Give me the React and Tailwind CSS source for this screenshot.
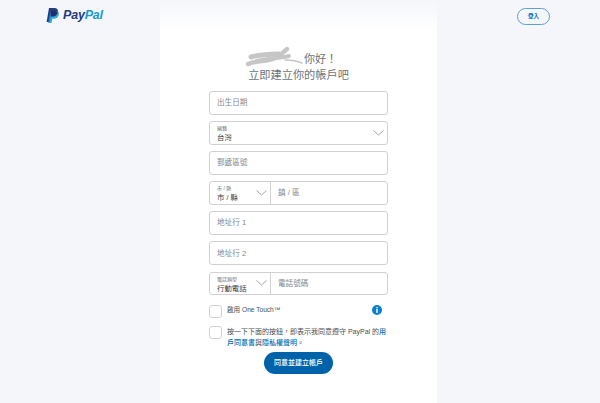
const CJK = { fontFamily: '"Liberation Sans", "Noto Sans CJK TC", sans-serif' };

function Chevron() {
  return (
    <svg width="11" height="6" viewBox="0 0 11 6" fill="none" stroke="#7b8185" strokeWidth="0.7">
      <polyline points="0.5,0.5 5.5,5 10.5,0.5" />
    </svg>
  );
}

function Field({ label }) {
  return (
    <div className="h-[23.5px] rounded-[3px] border border-[#cfd1d3] bg-white flex items-center pl-[7px] text-[7.6px] text-[#83898d]">
      {label}
    </div>
  );
}

function Stacked({ small, value }) {
  return (
    <div className="flex flex-col leading-none pt-[2px]">
      <span className="text-[5px] text-[#6c7378] mb-[3px]">{small}</span>
      <span className="text-[7.4px] text-[#3a3d3f]">{value}</span>
    </div>
  );
}

function Split({ small, value, placeholder }) {
  return (
    <div className="h-[23.5px] rounded-[3px] border border-[#cfd1d3] bg-white flex">
      <div className="w-[61px] shrink-0 border-r border-[#cfd1d3] pl-[7px] pr-[3px] flex items-center justify-between">
        <Stacked small={small} value={value} />
        <Chevron />
      </div>
      <div className="flex-1 flex items-center pl-[7px] text-[7.6px] text-[#83898d]">{placeholder}</div>
    </div>
  );
}

function Logo() {
  return (
    <div className="flex items-center gap-[4px]">
      <svg width="13" height="15" viewBox="0 0 13 15">
        <path d="M3 0 H8.2 C11.2 0 12.4 1.7 11.9 4 C11.3 7 9.3 8.4 6.6 8.4 H5 L4 14 H0.6 Z" fill="#253b80" />
        <path d="M4.4 3 H9.6 C12.2 3 13.4 4.6 12.8 6.8 C12.2 9.5 10.3 10.8 7.8 10.8 H6.3 L5.5 15 H2.2 Z" fill="#179bd7" opacity="0.85" />
        <path d="M4.4 3 H9.6 L11.6 4.2 C11 7 9.3 8.4 6.6 8.4 H5 Z" fill="#222d65" />
      </svg>
      <span className="text-[12.5px] font-bold italic leading-none tracking-[-0.2px]" style={{ fontFamily: '"Liberation Sans", sans-serif' }}>
        <span className="text-[#253b80]">Pay</span>
        <span className="text-[#179bd7]">Pal</span>
      </span>
    </div>
  );
}

function A({ children }) {
  return <span className="text-[#0070ba] font-medium">{children}</span>;
}

export default function App() {
  return (
    <div className="grid grid-cols-[160px_277px_163px] h-[403px] overflow-hidden bg-[#f4f6fa]" style={CJK}>
      <div className="pl-[46px] pt-[8px]">
        <Logo />
      </div>

      <div className="bg-gradient-to-b from-[#f4f6fa] to-white to-[30px] flex flex-col">
        <div className="mt-[47px] pl-[85px] flex items-center text-[11px] leading-[16px] text-[#6c7378]">
          <svg width="59" height="20" viewBox="0 0 59 20" fill="none" stroke="#c6c6c6" strokeLinecap="round" className="blur-[0.4px]">
            <path d="M3 17 C12 13 22 15 30 11 C36 8 40 4 42 2" strokeWidth="4.5" />
            <path d="M6 10 C14 8 24 7 34 7" strokeWidth="5" />
            <path d="M12 14 C24 11 36 11 44 9" strokeWidth="4" />
            <path d="M40 13 C46 13 52 14 57 16" strokeWidth="1.4" />
          </svg>
          <span className="mt-[4px]">你好！</span>
        </div>
        <div className="text-[11.2px] leading-[16px] text-center text-[#6c7378]">立即建立你的帳戶吧</div>

        <div className="ml-[49px] w-[178.5px] mt-[8px] flex flex-col gap-[6.6px]">
          <Field label="出生日期" />
          <div className="h-[23.5px] rounded-[3px] border border-[#cfd1d3] bg-white pl-[7px] pr-[3px] flex items-center justify-between">
            <Stacked small="國籍" value="台灣" />
            <Chevron />
          </div>
          <Field label="郵遞區號" />
          <Split small="市 / 縣" value="市 / 縣" placeholder="鎮 / 區" />
          <Field label="地址行 1" />
          <Field label="地址行 2" />
          <Split small="電話類型" value="行動電話" placeholder="電話號碼" />
        </div>

        <div className="ml-[49px] w-[178.5px] mt-[10px] flex items-start">
          <div className="w-[13px] h-[13px] rounded-[3px] border border-[#cfd1d3] bg-white shrink-0" />
          <span className="ml-[5px] text-[6.6px] leading-[10px] text-[#4a4f52]">啟用 One Touch™</span>
          <svg width="10" height="10" viewBox="0 0 10 10" className="ml-auto mr-[6px]">
            <circle cx="5" cy="5" r="5" fill="#0a7fd0" />
            <rect x="4.3" y="2" width="1.4" height="1.3" fill="#fff" />
            <rect x="4.3" y="4" width="1.4" height="4" fill="#fff" />
          </svg>
        </div>

        <div className="ml-[49px] w-[178.5px] mt-[8px] flex items-start">
          <div className="w-[13px] h-[13px] rounded-[3px] border border-[#cfd1d3] bg-white shrink-0" />
          <p className="ml-[5px] text-[7px] leading-[11px] text-[#4a4f52]">
            按一下下面的按鈕，即表示我同意遵守 PayPal 的<A>用</A><A>戶同意書</A>與<A>隱私權聲明</A>。
          </p>
        </div>

        <button className="self-center mt-[4px] w-[69px] h-[22px] rounded-full bg-[#0062a8] text-white text-[7px] font-medium">
          同意並建立帳戶
        </button>
      </div>

      <div className="pl-[80px] pt-[8px]">
        <button className="block w-[33px] h-[17px] rounded-full border border-[#5f9fd4] text-[#0070ba] text-[5.5px] font-bold">
          登入
        </button>
      </div>
    </div>
  );
}
